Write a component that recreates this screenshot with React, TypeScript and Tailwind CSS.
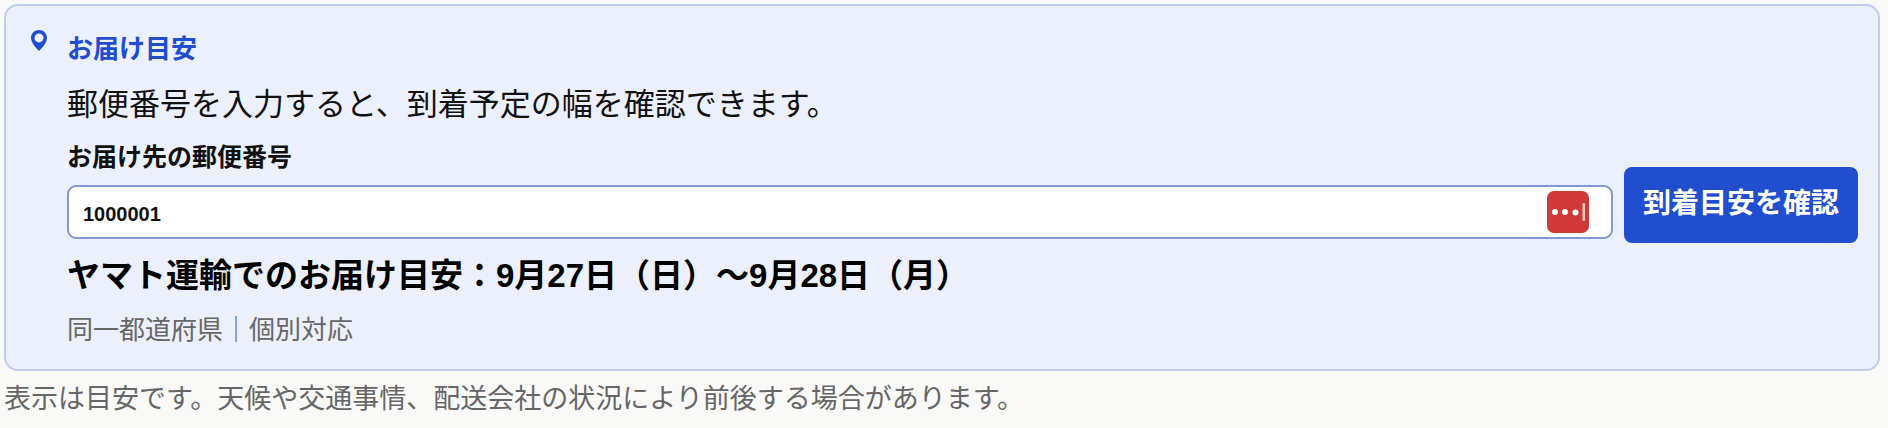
import { useState } from "react";

function PinIcon() {
  return (
    <svg viewBox="0 0 16 21" className="h-[21px] w-4 fill-[#204ecf]" aria-hidden="true">
      <path
        fillRule="evenodd"
        d="M8 0C3.5 0 0 3.4 0 7.8 0 12.6 4.2 17.3 8 21c3.8-3.7 8-8.4 8-13.2C16 3.4 12.5 0 8 0Zm0 3.4a4.5 4.5 0 1 1 0 9 4.5 4.5 0 0 1 0-9Z"
      />
    </svg>
  );
}

function PasswordManagerIcon() {
  return (
    <svg viewBox="0 0 42 42" className="size-[42px]" aria-hidden="true">
      <rect width="42" height="42" rx="7" fill="#cf3a38" />
      <circle cx="8" cy="21" r="3" fill="#fff" />
      <circle cx="18" cy="21" r="3" fill="#fff" />
      <circle cx="28.5" cy="21.5" r="3" fill="#fff" />
      <rect x="35.5" y="12" width="2.5" height="18" rx="1" fill="#f3c9c9" />
    </svg>
  );
}

export default function App() {
  const [postcode, setPostcode] = useState("1000001");

  return (
    <main className="min-h-screen bg-[#f9f9f7] py-1 pr-2 pl-1 font-['Liberation_Sans','Noto_Sans_CJK_JP',sans-serif] text-[#111]">
      <section className="flex gap-5 rounded-[14px] border-2 border-[#c0cdf3] bg-[#ecf0fc] pt-6 pr-5 pb-[21px] pl-[25px]">
        <PinIcon />
        <div className="min-w-0 flex-1">
          <h2 className="text-[26px] leading-[38px] font-bold text-[#204ecf]">お届け目安</h2>
          <p className="mt-3 text-[31px] leading-[50px]">
            郵便番号を入力すると、到着予定の幅を確認できます。
          </p>
          <form className="mt-[11px] flex items-end gap-[11px]" onSubmit={(e) => e.preventDefault()}>
            <div className="min-w-0 flex-1 pb-1">
              <label htmlFor="postcode" className="block text-[25px] leading-8 font-bold">
                お届け先の郵便番号
              </label>
              <div className="relative mt-3">
                <input
                  id="postcode"
                  inputMode="numeric"
                  value={postcode}
                  onChange={(e) => setPostcode(e.target.value)}
                  className="block h-[54px] w-full rounded-[9px] border-2 border-[#8199d4] bg-white pt-1 pr-18 pl-3.5 text-[20px] font-bold"
                />
                <span className="absolute top-1.5 right-6">
                  <PasswordManagerIcon />
                </span>
              </div>
            </div>
            <button
              type="submit"
              className="h-19 shrink-0 rounded-lg bg-[#204ecf] px-[19px] pb-0.5 text-[28px] font-bold text-white"
            >
              到着目安を確認
            </button>
          </form>
          <p className="mt-[9px] text-[33px] leading-12 font-bold text-black">
            ヤマト運輸でのお届け目安：9月27日（日）〜9月28日（月）
          </p>
          <p className="mt-3 text-[26px] leading-9 text-[#666]">同一都道府県｜個別対応</p>
        </div>
      </section>
      <p className="mt-2 text-[27px] leading-10 text-[#666]">
        表示は目安です。天候や交通事情、配送会社の状況により前後する場合があります。
      </p>
    </main>
  );
}
